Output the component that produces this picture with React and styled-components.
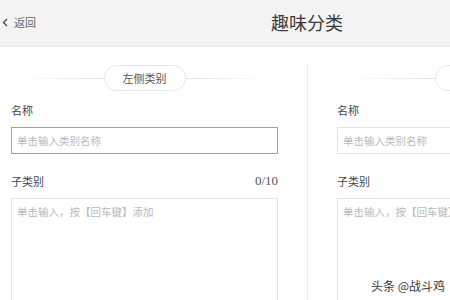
import React from "react";
import styled, { createGlobalStyle } from "styled-components";

const Global = createGlobalStyle`
  html, body { margin: 0; padding: 0; overflow: hidden; background: #fff; }
  body { font-family: "Noto Sans CJK SC", "Liberation Sans", sans-serif; }
  * { box-sizing: border-box; }
`;

const Page = styled.div`
  width: 614px;
  height: 300px;
  position: relative;
  overflow: hidden;
`;

const Header = styled.header`
  height: 47px;
  background: #f3f3f3;
  border-bottom: 1px solid #e8e8e8;
  display: grid;
  grid-template-columns: 1fr auto 1fr;
  align-items: center;
`;

const Back = styled.div`
  display: flex;
  align-items: center;
  gap: 6px;
  padding-left: 2px;
  font-size: 11px;
  color: #666;
  margin-top: -2px;
`;

const Title = styled.h1`
  margin: 0;
  margin-top: -3px;
  font-size: 18px;
  font-weight: 400;
  color: #3a3a3a;
`;

const Columns = styled.div`
  display: grid;
  grid-template-columns: 307px 307px;
  margin-top: 16px;
`;

const Column = styled.section`
  padding: 2px ${(p) => (p.$right ? "0" : "29px")} 0 ${(p) => (p.$right ? "29px" : "11px")};
  border-left: ${(p) => (p.$right ? "1px solid #ececec" : "none")};
  height: 240px;
`;

const Divider = styled.div`
  display: flex;
  align-items: center;
  height: 26px;
  &::before, &::after {
    content: "";
    flex: 1;
    height: 1px;
  }
  &::before {
    background: linear-gradient(to right, rgba(225,225,225,0) 10%, #e2e2e2 100%);
  }
  &::after {
    background: linear-gradient(to right, #e2e2e2 0%, rgba(225,225,225,0) 90%);
  }
`;

const Pill = styled.div`
  width: 82px;
  height: 26px;
  border: 1px solid #e8e8e8;
  border-radius: 13px;
  display: flex;
  align-items: center;
  justify-content: center;
  font-size: 11px;
  color: #555;
`;

const LabelRow = styled.div`
  display: flex;
  justify-content: space-between;
  align-items: center;
  height: 16px;
  margin-top: ${(p) => p.$top}px;
  font-size: 11px;
  color: #444;
`;

const Count = styled.span`
  font-family: "Liberation Serif", serif;
  font-size: 13px;
  color: #555;
`;

const Input = styled.div`
  margin-top: 9px;
  height: 27px;
  border: 1px solid ${(p) => (p.$active ? "#80c068" : "#e4e4e4")};
  display: flex;
  align-items: center;
  padding-left: 5px;
  font-size: 10.5px;
  color: #b8b8b8;
`;

const TextArea = styled.div`
  margin-top: 9px;
  height: 120px;
  border: 1px solid #e4e4e4;
  padding: 5px 5px;
  font-size: 10.5px;
  color: #b8b8b8;
`;

const Watermark = styled.div`
  position: absolute;
  left: 371px;
  top: 277px;
  font-size: 12px;
  color: #3a3a3a;
  text-shadow: 0 0 2px #fff, 0 0 2px #fff;
`;

function Form({ right }) {
  return (
    <Column $right={right}>
      <Divider>
        <Pill>{right ? "右侧类别" : "左侧类别"}</Pill>
      </Divider>
      <LabelRow $top={11}>名称</LabelRow>
      <Input $active={!right}>单击输入类别名称</Input>
      <LabelRow $top={19}>
        <span>子类别</span>
        {!right && <Count>0/10</Count>}
      </LabelRow>
      <TextArea>单击输入，按【回车键】添加</TextArea>
    </Column>
  );
}

export default function App() {
  return (
    <Page>
      <Global />
      <Header>
        <Back>
          <svg width="6" height="9" viewBox="0 0 6 9">
            <path d="M5 1 L1.5 4.5 L5 8" fill="none" stroke="#444" strokeWidth="1.3" />
          </svg>
          <span>返回</span>
        </Back>
        <Title>趣味分类</Title>
        <div />
      </Header>
      <Columns>
        <Form />
        <Form right />
      </Columns>
      <Watermark>头条 @战斗鸡</Watermark>
    </Page>
  );
}
